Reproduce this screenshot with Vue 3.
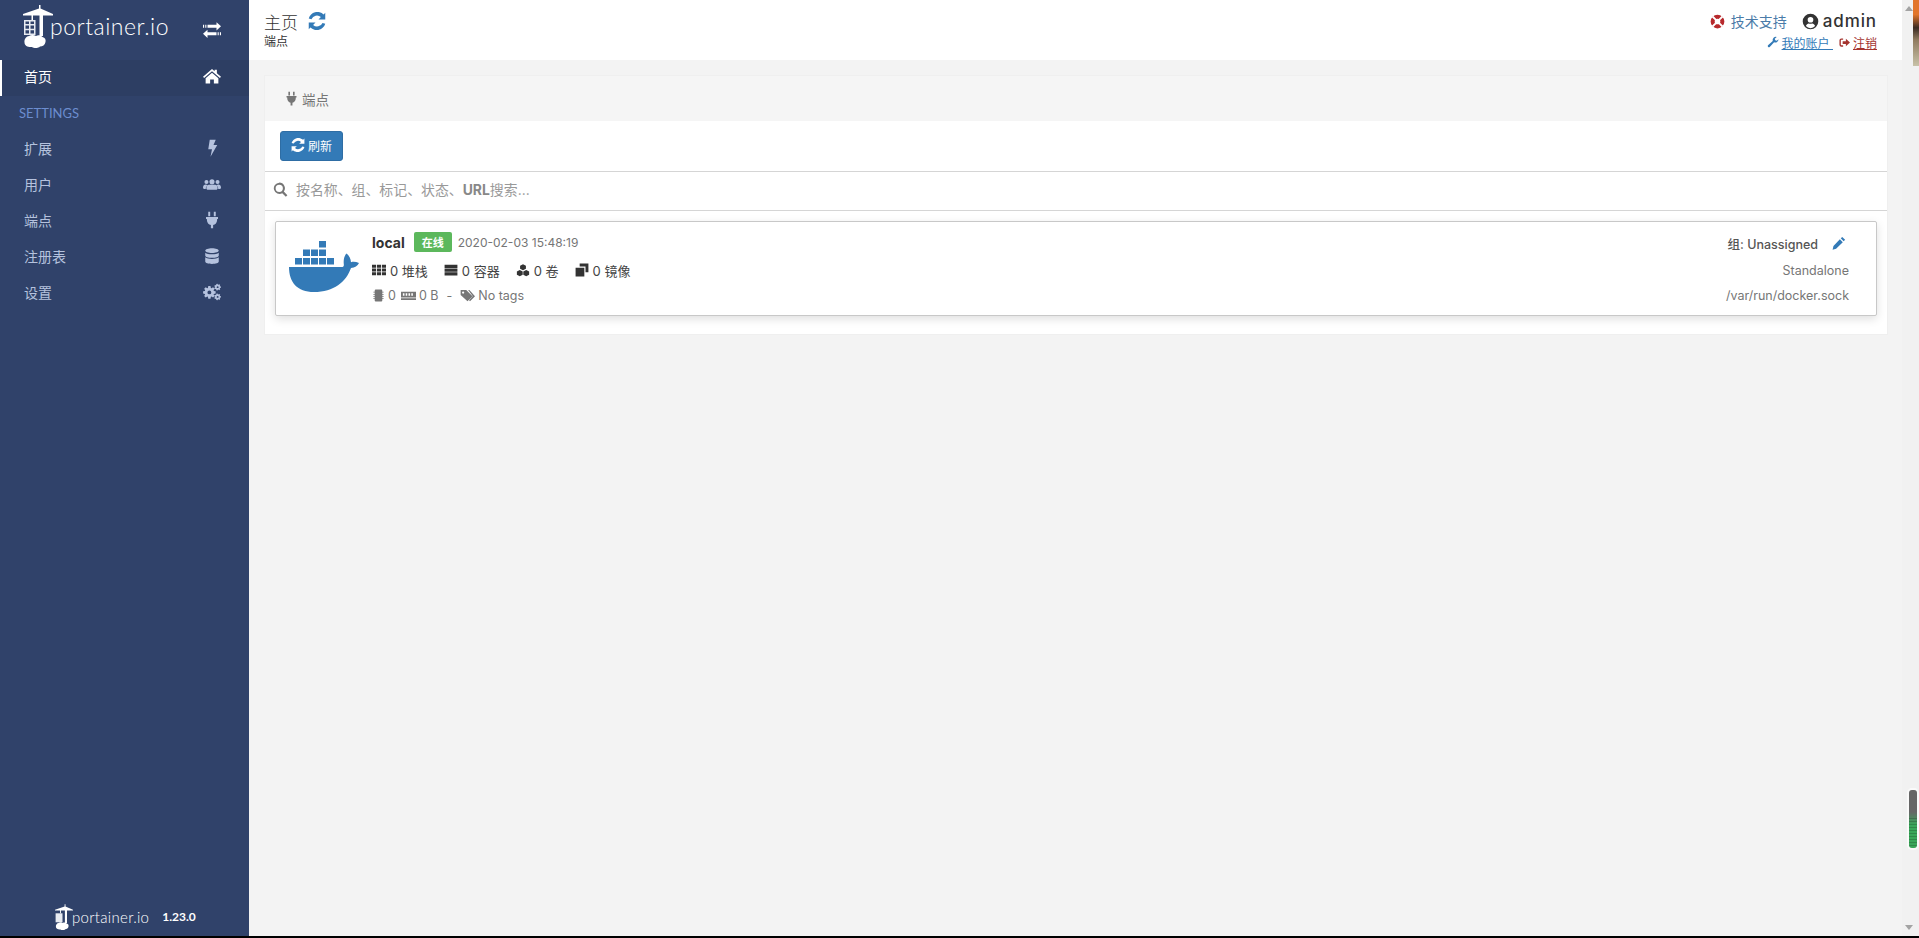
<script setup>
function gear(cx, cy, ro, ri, hole, teeth) {
  const pts = []
  const step = (Math.PI * 2) / teeth
  for (let i = 0; i < teeth; i++) {
    const a = i * step
    const w = step * 0.22
    const seq = [
      [ri, a - step * 0.5 + w * 0.4],
      [ro, a - w],
      [ro, a + w],
      [ri, a + step * 0.5 - w * 0.4],
    ]
    for (const [r, t] of seq) {
      pts.push(`${(cx + r * Math.cos(t)).toFixed(2)} ${(cy + r * Math.sin(t)).toFixed(2)}`)
    }
  }
  const ring = `M${cx - hole} ${cy}a${hole} ${hole} 0 1 0 ${hole * 2} 0a${hole} ${hole} 0 1 0 ${-hole * 2} 0z`
  return `M${pts.join('L')}z${ring}`
}

const nav = [
  { label: '扩展', icon: 'bolt' },
  { label: '用户', icon: 'users' },
  { label: '端点', icon: 'plug' },
  { label: '注册表', icon: 'db' },
  { label: '设置', icon: 'cogs' },
]
const stats = [
  { icon: 'th', text: '0 堆栈' },
  { icon: 'server', text: '0 容器' },
  { icon: 'cubes', text: '0 卷' },
  { icon: 'clone', text: '0 镜像' },
]
const icons = {
  bolt: 'M9 1h8l-3 7h5L10 23.500l2-10H7z',
  users: 'M12 5.500a3.400 3.400 0 1 1 0 6.800 3.400 3.400 0 0 1 0-6.800zM4.600 6.600a2.700 2.700 0 1 1 0 5.400 2.700 2.700 0 0 1 0-5.400zM19.400 6.600a2.700 2.700 0 1 1 0 5.400 2.700 2.700 0 0 1 0-5.400zM0 17c0-3 1.600-4.300 3.600-4.300 1 0 1.700.3 2.300.8-1.400 1.200-2.100 2.900-2.200 5H1.500C.6 18.500 0 18 0 17zM24 17c0-3-1.600-4.300-3.600-4.300-1 0-1.700.3-2.300.8 1.400 1.200 2.100 2.900 2.200 5h2.200c.9 0 1.500-.5 1.500-1.500zM8 13h8c2.200 0 3.500 1.800 3.500 4.500 0 1.300-.8 2-2 2h-11c-1.200 0-2-.7-2-2C4.500 14.800 5.800 13 8 13z',
  plug: 'M7 1h2.600v6H7zM14.400 1H17v6h-2.600zM4 8h16v2.500h-1.200V12c0 3.600-2.500 6.200-5.300 6.800V23h-3v-4.200C7.700 18.200 5.200 15.600 5.200 12v-1.500H4z',
  db: 'M12 1.500c5 0 9 1.300 9 3.200S17 8 12 8 3 6.600 3 4.700s4-3.200 9-3.200zM3 7.500C4.800 9 8 9.700 12 9.700s7.200-.7 9-2.200v3.700c0 1.900-4 3.200-9 3.200s-9-1.300-9-3.200zM3 13.800c1.800 1.500 5 2.200 9 2.200s7.200-.7 9-2.200v5.500c0 1.900-4 3.200-9 3.200s-9-1.300-9-3.200z',
  cogs: gear(8.500, 12.500, 8.500, 6.300, 2.600, 8) + gear(19.500, 5.500, 4.500, 3.300, 1.300, 7) + gear(19.500, 18.500, 4.500, 3.300, 1.300, 7),
  home: 'M12 2.500 15.500 5.600V3.500h3v4.700L24 13l-1.500 1.700L12 5.500 1.500 14.700 0 13zM12 7.500l8.500 7.400V22h-6v-5.500h-5V22h-6v-7.100z',
  exchange: 'M6 5h12V1.500L24 7l-6 5.500V9H6zM3 5h1.500v4H3zM0 5h1.500v4H0zM18 15H6v-3.500L0 17l6 5.500V19h12zM21 15h-1.500v4H21zM24 15h-1.500v4H24z',
  refresh: 'M20.800 3.200l2.200-2.200V10h-9l3.200-3.200A8 8 0 0 0 4.600 9.500L1 8.500A12 12 0 0 1 20.800 3.200zM3.200 20.800 1 23v-9h9l-3.200 3.200a8 8 0 0 0 12.600-2.700l3.600 1A12 12 0 0 1 3.200 20.800z',
  search: 'M10 1a9 9 0 0 1 7.300 14.300l5.700 5.700-2.500 2.500-5.700-5.700A9 9 0 1 1 10 1zm0 3.200a5.800 5.800 0 1 0 0 11.600 5.800 5.800 0 0 0 0-11.600z',
  th: 'M0 3h7v5H0zM8.500 3h7v5h-7zM17 3h7v5h-7zM0 9.500h7v5H0zM8.500 9.500h7v5h-7zM17 9.500h7v5h-7zM0 16h7v5H0zM8.500 16h7v5h-7zM17 16h7v5h-7z',
  server: 'M1 3h22v5.500H1zM1 9.500h22V15H1zM1 16h22v5.500H1z',
  cubes: 'M12 2l5 2.500v5.500l-5 2.500-5-2.500V4.500zM6.500 12l5 2.500V20l-5 2.500-5-2.500v-5.500zM17.500 12l5 2.500V20l-5 2.500-5-2.500v-5.500z',
  clone: 'M8 1h15v15h-5V6H8zM1 8h15v15H1z',
  tags: 'M1 3h9l10 10-8 8L1 11zM5 5.500a1.800 1.800 0 1 0 0 3.600 1.800 1.800 0 0 0 0-3.600zM13 3h2l9 10-8 8-1.500-1.500 6-6.500z',
  chip: 'M7 1h10a2 2 0 0 1 2 2v18a2 2 0 0 1-2 2H7a2 2 0 0 1-2-2V3a2 2 0 0 1 2-2zM2.500 5H5v1.500H2.500zM2.500 9H5v1.500H2.500zM2.500 13H5v1.500H2.500zM2.500 17H5v1.500H2.500zM19 5h2.500v1.500H19zM19 9h2.500v1.500H19zM19 13h2.500v1.500H19zM19 17h2.500v1.500H19z',
  memory: 'M0 6h24v9H0zM3 8.500v4h2.500v-4zM7.500 8.500v4H10v-4zM12 8.500v4h2.500v-4zM16.500 8.500v4H19v-4zM0 16.500h24V19H0z',
  pencil: 'M17.500 1.500l5 5-2.500 2.500-5-5zM13.500 5.500l5 5L7 22l-6 1.500L2.500 17z',
  wrench: 'M23 6.500a6.500 6.500 0 0 1-8.800 6L5.500 22a2.500 2.500 0 0 1-3.500-3.500l9.500-8.700a6.500 6.500 0 0 1 8-8L15.500 5.500l1 3 3 1z',
  signout: 'M9 3v3H5a1 1 0 0 0-1 1v10a1 1 0 0 0 1 1h4v3H5a4 4 0 0 1-4-4V7a4 4 0 0 1 4-4zM15 4l9 8-9 8v-5H8V9h7z',
  lifering: 'M12 1a11 11 0 1 1 0 22 11 11 0 0 1 0-22zm0 6.500a4.500 4.500 0 1 0 0 9 4.500 4.500 0 0 0 0-9z',
  user: 'M12 1a11 11 0 1 1 0 22 11 11 0 0 1 0-22zm0 4.500a4 4 0 1 0 0 8 4 4 0 0 0 0-8zM5.500 18.500a8.500 8.500 0 0 0 13 0c-.7-2.500-2.600-3.700-4-3.700-.8 0-1.300.5-2.500.5s-1.700-.5-2.500-.5c-1.400 0-3.300 1.200-4 3.700z',
}
</script>

<template>
  <div class="page">
    <aside class="sidebar">
      <div class="brand">
        <svg class="logo" viewBox="0 0 30 44">
          <path d="M16 0h1.500v3.500L30 9v1.500H20V31h-3.500V10.500H10V15H8.500v-4.500H0V9l16-5.500z" fill="#fff" />
          <path d="M1 15h11.500v15H1zM2.500 19h3.500v-2.500H2.500zM7.500 19h3.500v-2.500H7.500zM2.500 23.800h3.500v-3.300H2.500zM7.500 23.800h3.500v-3.300H7.500zM2.500 28.500h3.500v-3.200H2.500zM7.500 28.500h3.500v-3.200H7.500z" fill="#e8ebf1" fill-rule="evenodd" />
          <path d="M6 31c2-1.500 5-1.500 7 0 2-1.200 5-.7 6.500 1 2.500.5 3.500 2.500 3 5-.5 3-3 4.500-5.500 4.500-1.500 1.800-6 2-8 .5-3.500.5-7.500-1-7.500-4.500-.5-3.500 2-6.500 4.500-6.500z" fill="#fff" />
        </svg>
        <span class="brand-text">portainer.io</span>
        <svg class="exchange" viewBox="0 0 24 24"><path :d="icons.exchange" /></svg>
      </div>
      <a class="nav-item active">
        <span>首页</span>
        <svg class="nav-icon" viewBox="0 0 24 24"><path :d="icons.home" /></svg>
      </a>
      <div class="nav-heading">SETTINGS</div>
      <a v-for="item in nav" :key="item.label" class="nav-item">
        <span>{{ item.label }}</span>
        <svg class="nav-icon" viewBox="0 0 24 24"><path :d="icons[item.icon]" :fill-rule="item.icon === 'cogs' ? 'evenodd' : 'nonzero'" /></svg>
      </a>
      <div class="foot">
        <svg class="foot-logo" viewBox="0 0 30 44">
          <path d="M16 0h1.500v3.500L30 9v1.500H20V31h-3.500V10.500H10V15H8.500v-4.500H0V9l16-5.500z" fill="#fff" />
          <path d="M1 15h11.500v15H1z" fill="#e8ebf1" />
          <path d="M6 31c2-1.500 5-1.500 7 0 2-1.200 5-.7 6.500 1 2.500.5 3.500 2.500 3 5-.5 3-3 4.500-5.500 4.500-1.500 1.800-6 2-8 .5-3.500.5-7.500-1-7.500-4.500-.5-3.500 2-6.500 4.500-6.500z" fill="#fff" />
        </svg>
        <span class="foot-text">portainer.io</span>
        <span class="foot-ver">1.23.0</span>
      </div>
    </aside>

    <div class="main">
      <header class="topbar">
        <div class="crumb">
          <div class="crumb-title">
            <span>主页</span>
            <svg class="title-refresh" viewBox="0 0 24 24"><path :d="icons.refresh" /></svg>
          </div>
          <div class="crumb-sub">端点</div>
        </div>
        <div class="account">
          <div class="account-top">
            <svg class="ring" viewBox="0 0 24 24">
              <path :d="icons.lifering" fill-rule="evenodd" />
              <path d="M4 4l5.500 5.500M20 4l-5.500 5.500M4 20l5.500-5.500M20 20l-5.500-5.500" stroke="#fff" stroke-width="3" />
            </svg>
            <a class="support">技术支持</a>
            <svg class="user-ic" viewBox="0 0 24 24"><path :d="icons.user" fill-rule="evenodd" /></svg>
            <span class="admin">admin</span>
          </div>
          <div class="account-links">
            <svg class="mini wrench blue" viewBox="0 0 24 24"><path :d="icons.wrench" /></svg>
            <a class="link blue">我的账户&nbsp;</a>
            <svg class="mini red" viewBox="0 0 24 24"><path :d="icons.signout" /></svg>
            <a class="link red">注销</a>
          </div>
        </div>
      </header>

      <main class="content">
        <section class="panel">
          <div class="panel-title">
            <svg class="plug" viewBox="0 0 24 24"><path :d="icons.plug" /></svg>
            <span>端点</span>
          </div>
          <div class="toolbar">
            <button class="btn">
              <svg viewBox="0 0 24 24"><path :d="icons.refresh" /></svg>
              <span>刷新</span>
            </button>
          </div>
          <div class="search">
            <svg viewBox="0 0 24 24"><path :d="icons.search" fill-rule="evenodd" /></svg>
            <span>按名称、组、标记、状态、<b>URL</b>搜索...</span>
          </div>
          <div class="list">
            <article class="card">
              <svg class="whale" viewBox="0 0 70 52">
                <path d="M0 27h53.500c1-.3 1.500-1 1.300-3-.5-4 .5-8 2.500-10.500 2.500 1.500 4.500 5 4.700 8.700 2-.8 5-.6 8 .8-1.500 3-4 4.800-8 5C57 42 45 52 25 52 8 52 0 42 0 27z" fill="#337ab7"/>
                <g fill="#337ab7">
                  <rect x="6" y="18" width="7" height="6.500" /><rect x="14" y="18" width="7" height="6.500" /><rect x="22" y="18" width="7" height="6.500" /><rect x="30" y="18" width="7" height="6.500" /><rect x="38" y="18" width="7" height="6.500" />
                  <rect x="14" y="9.500" width="7" height="6.500" /><rect x="22" y="9.500" width="7" height="6.500" /><rect x="30" y="9.500" width="7" height="6.500" />
                  <rect x="30" y="1" width="7" height="6.500" />
                </g>
              </svg>
              <div class="info">
                <div class="line first">
                  <strong>local</strong>
                  <span class="badge">在线</span>
                  <span class="date">2020-02-03 15:48:19</span>
                </div>
                <div class="line stats">
                  <span v-for="s in stats" :key="s.icon" class="stat">
                    <svg viewBox="0 0 24 24"><path :d="icons[s.icon]" /></svg>{{ s.text }}
                  </span>
                </div>
                <div class="line meta">
                  <svg viewBox="0 0 24 24"><path :d="icons.chip" /></svg><span>0</span>
                  <svg class="mem" viewBox="0 0 24 24"><path :d="icons.memory" fill-rule="evenodd" /></svg><span>0 B</span>
                  <span class="dash">-</span>
                  <svg class="tag" viewBox="0 0 24 24"><path :d="icons.tags" fill-rule="evenodd" /></svg><span>No tags</span>
                </div>
              </div>
              <div class="side">
                <div class="group">
                  <span>组: Unassigned</span>
                  <svg viewBox="0 0 24 24"><path :d="icons.pencil" /></svg>
                </div>
                <div class="grey type">Standalone</div>
                <div class="grey">/var/run/docker.sock</div>
              </div>
            </article>
          </div>
        </section>
      </main>
    </div>

    <div class="rail">
      <span class="arrow up"></span>
      <span class="photo"></span>
      <span class="thumb"></span>
      <span class="arrow down"></span>
    </div>
  </div>
</template>

<style>
html, body { margin: 0; background: #000; overflow: hidden; }
</style>

<style scoped>
.page {
  display: flex;
  height: 936px;
  background: #f3f3f3;
  font-family: Inter, "Noto Sans CJK SC", sans-serif;
  color: #333;
  overflow: hidden;
}
a { text-decoration: none; }
svg { fill: currentColor; flex: none; display: block; }

.sidebar {
  width: 249px;
  flex: none;
  background: #30426a;
  display: flex;
  flex-direction: column;
  color: #a9b8d8;
}
.brand {
  height: 60px;
  display: flex;
  align-items: flex-start;
  padding: 5px 28px 0 23px;
  box-sizing: border-box;
  color: #fff;
}
.logo { width: 30px; height: 44px; }
.brand-text {
  font: 300 23px/1 Lato, sans-serif;
  letter-spacing: .5px;
  margin: 10px 0 0 -3px;
}
.exchange { width: 18px; height: 18px; margin: 16px 0 0 auto; }
.nav-item {
  height: 36px;
  box-sizing: border-box;
  display: flex;
  align-items: center;
  justify-content: space-between;
  padding: 0 28px 5px 24px;
  font-size: 14px;
  color: #b5c2de;
}
.nav-item.active {
  background: #2d3e63;
  color: #fff;
  box-shadow: inset 2px 0 0 #fff;
}
.nav-icon { width: 18px; height: 18px; }
.nav-heading {
  height: 36px;
  padding-left: 19px;
  font: 400 13px/34px Lato, sans-serif;
  color: #6c8dcf;
}
.foot {
  margin-top: auto;
  height: 36px;
  padding: 0 0 2px 55px;
  box-sizing: border-box;
  display: flex;
  align-items: center;
  color: #fff;
}
.foot-logo { width: 18px; height: 27px; }
.foot-text { font: 300 15px/1 Lato, sans-serif; letter-spacing: .3px; margin-left: -1px; }
.foot-ver { font: 700 12px/1 Lato, sans-serif; margin-left: 13px; }

.main { flex: 1; min-width: 0; display: flex; flex-direction: column; }
.topbar {
  height: 60px;
  flex: none;
  background: #fff;
  display: flex;
  justify-content: space-between;
  padding: 0 25px 0 15px;
  box-sizing: border-box;
}
.crumb-title {
  display: flex;
  align-items: center;
  gap: 10px;
  font-size: 17px;
  font-weight: 300;
  margin-top: 10px;
  color: #333;
  height: 22px;
}
.title-refresh { width: 18px; height: 18px; color: #337ab7; }
.crumb-sub { font-size: 12px; line-height: 16px; margin-top: 2px; color: #333; }
.account { padding-top: 10px; }
.account-top { display: flex; align-items: center; height: 22px; justify-content: flex-end; }
.ring { width: 15px; height: 15px; color: #b7292c; margin-right: 6px; }
.support { font-size: 14px; color: #4b7ba8; margin-right: 15px; }
.user-ic { width: 17px; height: 17px; color: #333; margin-right: 4px; }
.admin { font-size: 17px; font-weight: 500; letter-spacing: .9px; }
.account-links { display: flex; align-items: center; justify-content: flex-end; height: 20px; font-size: 12px; }
.mini { width: 11px; height: 11px; margin-right: 3px; }
.mini.wrench { width: 12px; height: 12px; }
.link { text-decoration: underline; }
.link.blue { margin-right: 6px; }
.blue { color: #337ab7; }
.red { color: #a5342f; }

.content { flex: 1; padding: 16px 15px 0 16px; min-height: 0; }
.panel { background: #fff; box-shadow: 0 0 0 1px #efefef; }
.panel-title {
  height: 45px;
  background: #f5f5f5;
  display: flex;
  align-items: center;
  gap: 3px;
  padding-left: 19px;
  font-size: 13.500px;
  color: #767676;
}
.plug { width: 15px; height: 15px; }
.toolbar { height: 51px; padding: 10px 0 0 15px; box-sizing: border-box; border-bottom: 1px solid #d5d5d5; }
.btn {
  width: 63px;
  height: 30px;
  border: 1px solid #2e6da4;
  border-radius: 3px;
  background: #337ab7;
  color: #fff;
  display: flex;
  align-items: center;
  justify-content: center;
  gap: 3px;
  font: 12px "Noto Sans CJK SC", sans-serif;
  padding: 0 0 2px;
}
.btn svg { width: 14px; height: 14px; }
.search {
  height: 39px;
  box-sizing: border-box;
  display: flex;
  align-items: center;
  gap: 8px;
  padding: 0 0 4px 8px;
  border-bottom: 1px solid #d5d5d5;
  font-size: 13.900px;
  color: #999;
}
.search svg { width: 15px; height: 15px; color: #767676; }
.search b { color: #888; font-weight: 700; }
.list { padding: 10px 10px 18px; }
.card {
  height: 95px;
  box-sizing: border-box;
  border: 1px solid #c8c8c8;
  border-radius: 2px;
  box-shadow: 0 3px 10px rgba(0,0,0,.13);
  display: flex;
  align-items: flex-start;
  padding: 0 27px 0 13px;
  background: #fff;
}
.whale { width: 70px; height: 52px; margin-top: 18px; }
.info { margin-left: 13px; padding-top: 9px; }
.line { display: flex; align-items: center; }
.first { height: 22px; }
.first strong { font-size: 14px; font-weight: 700; }
.badge {
  background: #5cb85c;
  color: #fff;
  font: 700 11px/20px "Noto Sans CJK SC", sans-serif;
  padding: 0 8px;
  border-radius: 2px;
  margin-left: 9px;
}
.date { font-size: 12px; color: #767676; margin-left: 6px; }
.stats { height: 22px; margin-top: 6px; font-size: 13px; gap: 16px; }
.stat { display: flex; align-items: center; gap: 4px; color: #444; }
.stat svg { width: 14px; height: 14px; color: #333; }
.meta { height: 22px; margin-top: 3px; font-size: 12.500px; color: #767676; }
.meta svg { width: 13px; height: 13px; margin-right: 3px; }
.meta .mem { width: 15px; height: 15px; margin-left: 5px; }
.meta .dash { margin: 0 8px; }
.meta .tag { width: 15px; height: 15px; }
.side { margin-left: auto; text-align: right; padding-top: 10px; font-size: 12.500px; color: #767676; }
.group { display: flex; align-items: center; justify-content: flex-end; height: 22px; color: #555; gap: 14px; font-weight: 500; margin-right: 3px; }
.group svg { width: 14px; height: 14px; color: #337ab7; }
.grey { line-height: 25px; }
.type { margin-top: 4px; }

.rail { width: 17px; flex: none; position: relative; background: #f1f1f1; }
.arrow {
  position: absolute;
  left: 3px;
  width: 0;
  height: 0;
  border-left: 4px solid transparent;
  border-right: 4px solid transparent;
}
.arrow.up { top: 6px; border-bottom: 5px solid #a3a3a3; }
.arrow.down { top: 925px; border-top: 5px solid #a3a3a3; }
.photo {
  position: absolute;
  right: 0;
  top: 0;
  width: 6px;
  height: 66px;
  background: linear-gradient(#e2752b 0%, #e2752b 22%, #3a2a22 42%, #8f7a5e 60%, #c8c2a8 100%);
}
.thumb {
  position: absolute;
  left: 7px;
  top: 790px;
  width: 8px;
  height: 58px;
  border-radius: 3px;
  box-shadow: 0 0 0 2px #fafafa;
  background:
    repeating-linear-gradient(transparent 0 2px, rgba(0,0,0,.18) 2px 3px) bottom / 100% 55% no-repeat,
    linear-gradient(#666 0 38%, #3aa65a 60%, #3aa65a 100%);
}
</style>
